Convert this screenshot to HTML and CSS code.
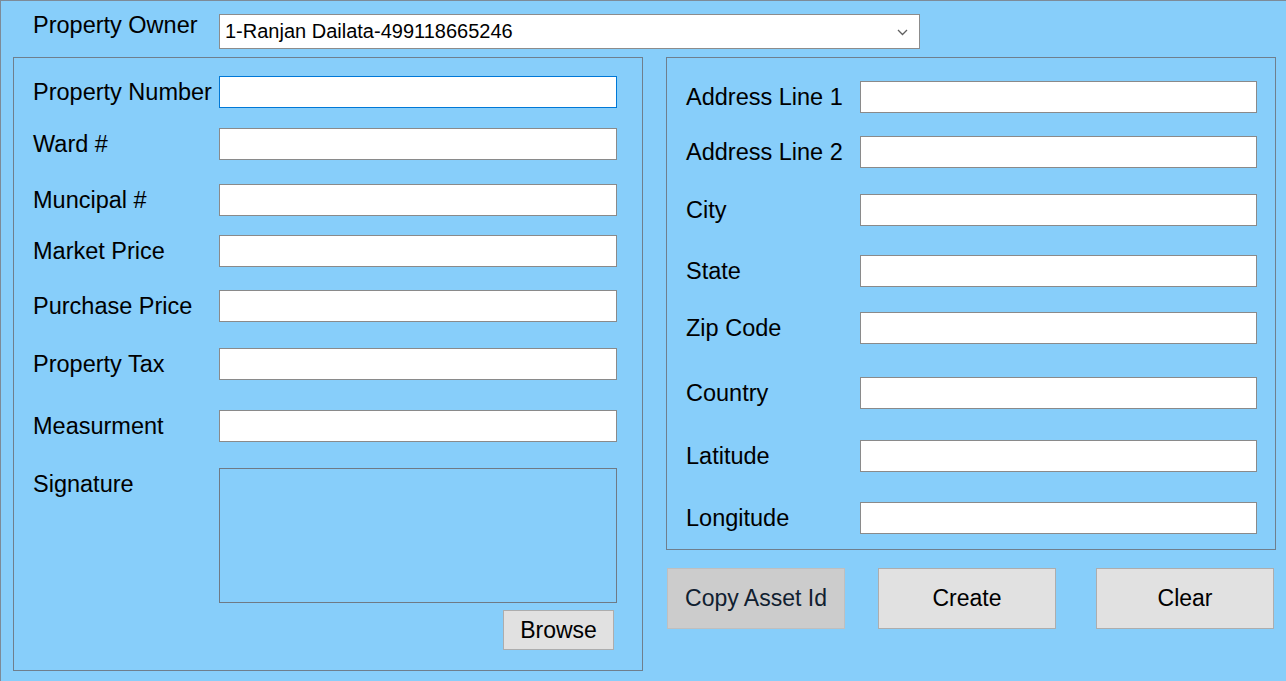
FILE: index.html
```html
<!DOCTYPE html>
<html>
<head>
<meta charset="utf-8">
<title>Property</title>
<link rel="stylesheet" href="styles.css">
</head>
<body>
<div class="frame">
  <div class="owner-row">
    <span class="owner-label">Property Owner</span>
    <div class="combo">
      <span class="combo-text">1-Ranjan Dailata-499118665246</span>
      <svg class="chev" width="11" height="7" viewBox="0 0 11 7"><polyline points="1,1 5.5,5.5 10,1" fill="none" stroke="#606060" stroke-width="1.3"/></svg>
    </div>
  </div>
  <div class="main">
    <div class="group left-group">
      <div class="lgrid">
        <span class="lbl">Property Number</span><div class="box focus"></div>
        <span class="lbl">Ward #</span><div class="box"></div>
        <span class="lbl">Muncipal #</span><div class="box"></div>
        <span class="lbl">Market Price</span><div class="box"></div>
        <span class="lbl">Purchase Price</span><div class="box"></div>
        <span class="lbl">Property Tax</span><div class="box"></div>
        <span class="lbl">Measurment</span><div class="box"></div>
        <span class="lbl">Signature</span>
        <div class="sig-col">
          <div class="sig"></div>
          <button class="btn browse">Browse</button>
        </div>
      </div>
    </div>
    <div class="right-col">
      <div class="group right-group">
        <div class="rgrid">
          <span class="lbl">Address Line 1</span><div class="box"></div>
          <span class="lbl">Address Line 2</span><div class="box"></div>
          <span class="lbl">City</span><div class="box"></div>
          <span class="lbl">State</span><div class="box"></div>
          <span class="lbl">Zip Code</span><div class="box"></div>
          <span class="lbl">Country</span><div class="box"></div>
          <span class="lbl">Latitude</span><div class="box"></div>
          <span class="lbl">Longitude</span><div class="box"></div>
        </div>
      </div>
      <div class="btn-row">
        <button class="btn big copy">Copy Asset Id</button>
        <button class="btn big create">Create</button>
        <button class="btn big clear">Clear</button>
      </div>
    </div>
  </div>
</div>
</body>
</html>
```
FILE: styles.css
```css
html, body {
  margin: 0;
  padding: 0;
  background: #87cefa;
}
body {
  font-family: "Liberation Sans", Arial, sans-serif;
  color: #000;
}
.frame {
  width: 1286px;
  height: 681px;
  box-sizing: border-box;
  border-top: 1px solid #7d8b98;
  border-left: 1px solid #7d8b98;
  padding: 13px 0 0 12px;
  background: #87cefa;
}
.owner-row {
  display: flex;
  align-items: flex-start;
  height: 35px;
}
.owner-label {
  font-size: 23.5px;
  line-height: 24px;
  margin-left: 20px;
  margin-top: -1px;
  width: 186px;
  white-space: nowrap;
}
.combo {
  width: 701px;
  height: 35px;
  box-sizing: border-box;
  background: #fff;
  border: 1px solid #8c8c8c;
  display: flex;
  align-items: center;
  justify-content: space-between;
  padding: 0 11px 0 5px;
}
.combo-text {
  font-size: 20px;
}
.chev {
  margin-top: 2px;
}
.main {
  display: flex;
  gap: 23px;
  margin-top: 8px;
}
.group {
  box-sizing: border-box;
  border: 1px solid #6f7f8d;
}
.left-group {
  width: 630px;
  height: 614px;
  padding: 18px 0 0 19px;
}
.lgrid {
  display: grid;
  grid-template-columns: 186px 398px;
  grid-template-rows: 52px 56px 51px 55px 58px 62px 58px auto;
  align-items: start;
}
.rgrid {
  display: grid;
  grid-template-columns: 174px 397px;
  grid-template-rows: 55px 58px 61px 57px 65px 63px 62px 32px;
  align-items: start;
}
.lbl {
  font-size: 23.5px;
  height: 32px;
  line-height: 32px;
  white-space: nowrap;
}
.box {
  height: 32px;
  box-sizing: border-box;
  background: #fff;
  border: 1px solid #8a8a8a;
}
.box.focus {
  border-color: #0078d7;
}
.sig-col {
  display: flex;
  flex-direction: column;
  align-items: flex-end;
}
.sig {
  width: 398px;
  height: 135px;
  box-sizing: border-box;
  border: 1px solid #6f7a85;
}
.btn {
  font-family: "Liberation Sans", Arial, sans-serif;
  font-size: 23px;
  color: #000;
  background: #e1e1e1;
  border: 1px solid #adadad;
  padding: 0;
  margin: 0;
  box-sizing: border-box;
}
.browse {
  width: 111px;
  height: 40px;
  margin-top: 7px;
  margin-right: 3px;
}
.right-col {
  display: flex;
  flex-direction: column;
}
.right-group {
  width: 610px;
  height: 493px;
  padding: 23px 0 0 19px;
}
.btn-row {
  display: flex;
  margin-top: 18px;
  margin-left: 1px;
}
.big {
  width: 178px;
  height: 61px;
}
.copy {
  background: #cccccc;
  border-color: #bfbfbf;
  color: #102030;
}
.create {
  margin-left: 33px;
}
.clear {
  margin-left: 40px;
}
```
